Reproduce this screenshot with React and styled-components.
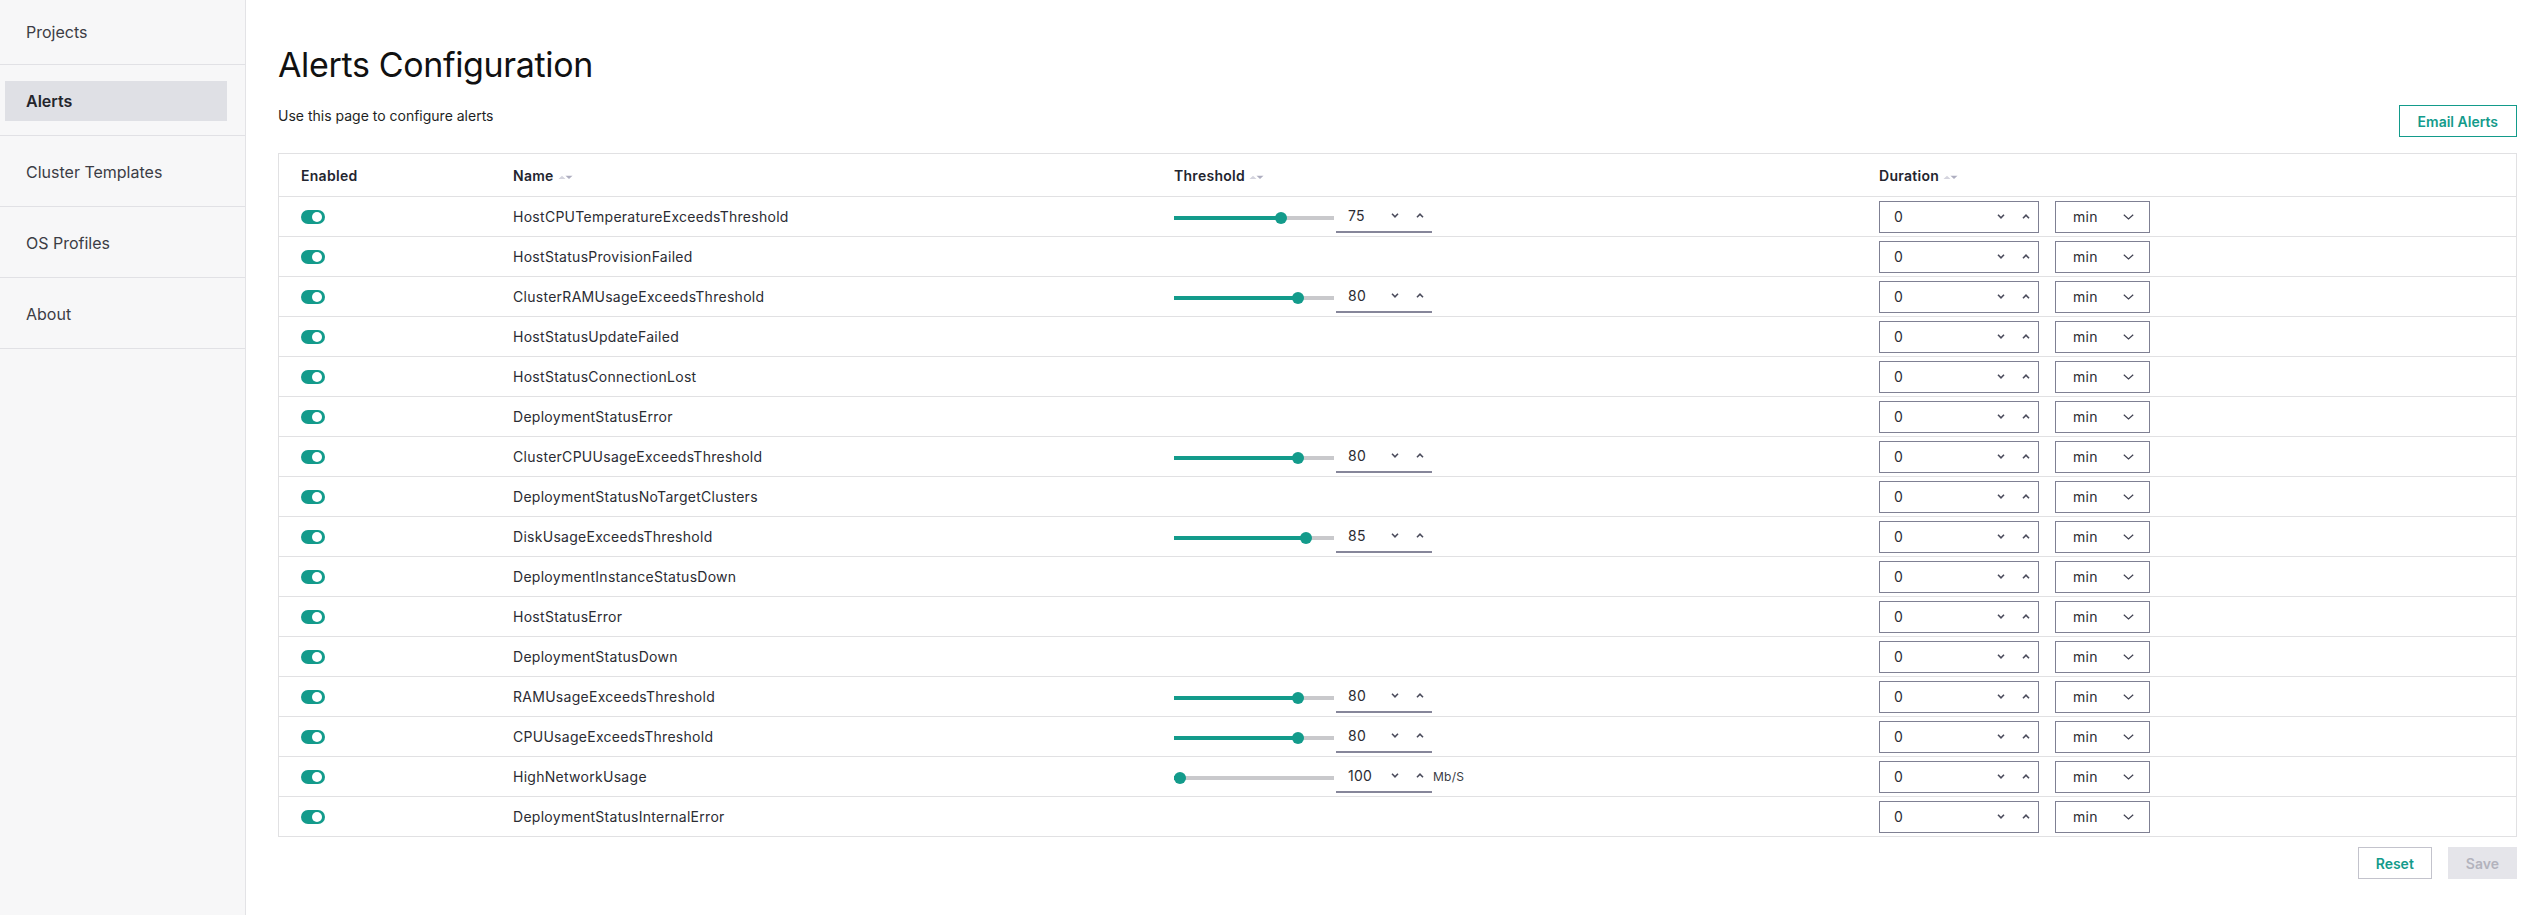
import React from 'react';
import styled, { createGlobalStyle } from 'styled-components';

const teal = '#139b8b';
const ink = '#2b2c33';

const GlobalStyle = createGlobalStyle`
  html, body {
    margin: 0;
    padding: 0;
    background: #fff;
    font-family: Inter, "Noto Sans", sans-serif;
    color: ${ink};
  }
  * { box-sizing: border-box; }
`;

const Page = styled.div`
  display: flex;
  min-height: 100vh;
`;

const Sidebar = styled.nav`
  width: 246px;
  flex-shrink: 0;
  background: #f7f7f8;
  border-right: 1px solid #e3e3e6;
`;

const NavItem = styled.div`
  height: ${(p) => (p.$first ? 65 : 71)}px;
  padding: ${(p) => (p.$first ? 0 : 2)}px 18px 0 5px;
  display: flex;
  align-items: center;
  border-bottom: 1px solid #e1e1e5;
`;

const NavLabel = styled.div`
  width: 222px;
  height: 40px;
  display: flex;
  align-items: center;
  padding-left: 21px;
  font-size: 16px;
  color: ${(p) => (p.$active ? '#24252c' : '#3c3d45')};
  font-weight: ${(p) => (p.$active ? 600 : 400)};
  background: ${(p) => (p.$active ? '#dfe0e5' : 'transparent')};
`;

const Main = styled.main`
  flex: 1;
  padding: 45px 18px 0 32px;
`;

const Title = styled.h1`
  margin: 0;
  font-size: 34px;
  line-height: 40px;
  font-weight: 400;
  letter-spacing: -0.35px;
  color: #111;
`;

const Toolbar = styled.div`
  margin-top: 20px;
  display: flex;
  justify-content: space-between;
  align-items: flex-start;
`;

const Subtitle = styled.p`
  margin: 1px 0 0;
  font-size: 14px;
  line-height: 20px;
  color: #1e1f24;
`;

const Button = styled.button`
  font-family: inherit;
  font-size: 14px;
  font-weight: 600;
  height: 32px;
  padding: 0 ${(p) => p.$pad || 17}px;
  background: ${(p) => (p.$disabled ? '#e5e5ea' : '#fff')};
  color: ${(p) => (p.$disabled ? '#b3b3bd' : teal)};
  border: 1px solid
    ${(p) => (p.$disabled ? '#e5e5ea' : p.$accent ? teal : '#c3c3cc')};
  cursor: pointer;
`;

const Table = styled.div`
  margin-top: 16px;
  border: 1px solid #e1e1e3;
`;

const Row = styled.div`
  display: grid;
  grid-template-columns: 212px 661px 705px 1fr;
  align-items: center;
  height: ${(p) => (p.$head ? 43 : 40)}px;
  border-bottom: 1px solid #e1e1e3;
  &:last-child {
    border-bottom: none;
    height: 39px;
  }
`;

const Cell = styled.div`
  padding-left: 22px;
  display: flex;
  align-items: center;
  font-size: 14px;
  letter-spacing: 0.28px;
  color: ${ink};
`;

const HeadCell = styled(Cell)`
  font-weight: 600;
  color: #23252f;
`;

const SortIcon = () => (
  <svg width="15" height="8" viewBox="0 0 15 8" style={{ marginLeft: 4, marginTop: 4 }}>
    <path d="M0.5 6 L4 2.8 L7.5 6 Z" fill="#d4d4de" />
    <path d="M7.5 2.8 L14.5 2.8 L11 6 Z" fill="#aeaec0" />
  </svg>
);

const Toggle = styled.div`
  width: 24px;
  height: 14px;
  border-radius: 7px;
  background: ${teal};
  position: relative;
  margin-top: 1px;
  &::after {
    content: '';
    position: absolute;
    top: 2px;
    left: 11px;
    width: 10px;
    height: 10px;
    border-radius: 50%;
    background: #fff;
  }
`;

const Slider = styled.div`
  width: 160px;
  height: 4px;
  background: #c9c9cc;
  position: relative;
  margin-top: 3px;
`;

const SliderFill = styled.div`
  position: absolute;
  left: 0;
  top: 0;
  bottom: 0;
  background: ${teal};
`;

const Thumb = styled.div`
  position: absolute;
  top: -4px;
  width: 12px;
  height: 12px;
  margin-left: -6px;
  border-radius: 50%;
  background: ${teal};
`;

const UnderlineInput = styled.div`
  width: 96px;
  height: 32px;
  margin-left: 2px;
  border-bottom: 2px solid #86869a;
  display: flex;
  align-items: center;
  padding: 0 8px 0 12px;
  font-size: 14px;
  color: ${ink};
`;

const BoxInput = styled.div`
  width: ${(p) => p.$w}px;
  height: 32px;
  border: 1px solid #7f8093;
  display: flex;
  align-items: center;
  padding: 0 ${(p) => p.$pr}px 0 ${(p) => p.$pl}px;
  font-size: 14px;
  color: ${ink};
  margin-right: 16px;
`;

const Value = styled.span`
  flex: 1;
`;

const Steppers = styled.span`
  display: flex;
  gap: 17px;
  align-items: center;
`;

const Unit = styled.span`
  margin-left: 1px;
  font-size: 12px;
  color: #3a3b44;
`;

const Footer = styled.div`
  margin-top: 10px;
  display: flex;
  justify-content: flex-end;
  gap: 16px;
`;

const Chevron = ({ up }) => (
  <svg width="8" height="5" viewBox="0 0 8 5">
    <path
      d={up ? 'M1 4.2 L4 1.2 L7 4.2' : 'M1 0.8 L4 3.8 L7 0.8'}
      fill="none"
      stroke="#4b4c5c"
      strokeWidth="1.6"
    />
  </svg>
);

const SelectChevron = () => (
  <svg width="11" height="6" viewBox="0 0 11 6">
    <path d="M0.8 0.8 L5.5 5 L10.2 0.8" fill="none" stroke="#3f4050" strokeWidth="1.2" />
  </svg>
);

const Stepper = () => (
  <Steppers>
    <Chevron />
    <Chevron up />
  </Steppers>
);

const alerts = [
  { name: 'HostCPUTemperatureExceedsThreshold', value: 75, pos: 0.68 },
  { name: 'HostStatusProvisionFailed' },
  { name: 'ClusterRAMUsageExceedsThreshold', value: 80, pos: 0.8 },
  { name: 'HostStatusUpdateFailed' },
  { name: 'HostStatusConnectionLost' },
  { name: 'DeploymentStatusError' },
  { name: 'ClusterCPUUsageExceedsThreshold', value: 80, pos: 0.8 },
  { name: 'DeploymentStatusNoTargetClusters' },
  { name: 'DiskUsageExceedsThreshold', value: 85, pos: 0.85 },
  { name: 'DeploymentInstanceStatusDown' },
  { name: 'HostStatusError' },
  { name: 'DeploymentStatusDown' },
  { name: 'RAMUsageExceedsThreshold', value: 80, pos: 0.8 },
  { name: 'CPUUsageExceedsThreshold', value: 80, pos: 0.8 },
  { name: 'HighNetworkUsage', value: 100, pos: 0, unit: 'Mb/S' },
  { name: 'DeploymentStatusInternalError' },
];

const navItems = ['Projects', 'Alerts', 'Cluster Templates', 'OS Profiles', 'About'];

const Threshold = ({ value, pos, unit }) => {
  // thumb travels between 6px and 154px of the 160px track
  const x = 6 + pos * 148;
  return (
    <>
      <Slider>
        <SliderFill style={{ width: x }} />
        <Thumb style={{ left: x }} />
      </Slider>
      <UnderlineInput>
        <Value>{value}</Value>
        <Stepper />
      </UnderlineInput>
      {unit && <Unit>{unit}</Unit>}
    </>
  );
};

const App = () => {
  return (
    <Page>
      <GlobalStyle />
      <Sidebar>
        {navItems.map((item, i) => (
          <NavItem key={item} $first={i === 0}>
            <NavLabel $active={item === 'Alerts'}>{item}</NavLabel>
          </NavItem>
        ))}
      </Sidebar>
      <Main>
        <Title>Alerts Configuration</Title>
        <Toolbar>
          <Subtitle>Use this page to configure alerts</Subtitle>
          <Button $accent $pad={18}>Email Alerts</Button>
        </Toolbar>
        <Table>
          <Row $head>
            <HeadCell>Enabled</HeadCell>
            <HeadCell>Name<SortIcon /></HeadCell>
            <HeadCell>Threshold<SortIcon /></HeadCell>
            <HeadCell>Duration<SortIcon /></HeadCell>
          </Row>
          {alerts.map((a) => (
            <Row key={a.name}>
              <Cell><Toggle /></Cell>
              <Cell>{a.name}</Cell>
              <Cell>{a.value !== undefined && <Threshold {...a} />}</Cell>
              <Cell>
                <BoxInput $w={160} $pl={14} $pr={8}>
                  <Value>0</Value>
                  <Stepper />
                </BoxInput>
                <BoxInput $w={95} $pl={17} $pr={15}>
                  <Value>min</Value>
                  <SelectChevron />
                </BoxInput>
              </Cell>
            </Row>
          ))}
        </Table>
        <Footer>
          <Button $pad={17}>Reset</Button>
          <Button $disabled $pad={17}>Save</Button>
        </Footer>
      </Main>
    </Page>
  );
};

export default App;
